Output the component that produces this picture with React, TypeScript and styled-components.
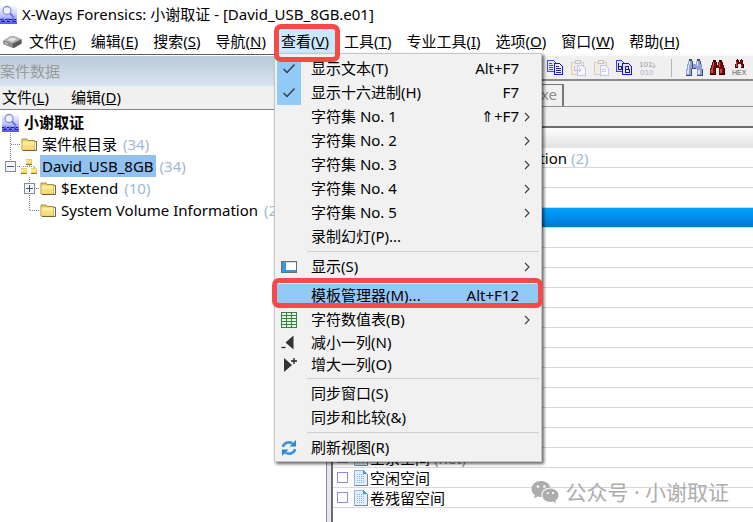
import React from 'react';
import styled, { createGlobalStyle, css } from 'styled-components';

const GlobalStyle = createGlobalStyle`
  *, *::before, *::after { box-sizing: border-box; }
  body {
    margin: 0;
    background: #fff;
    color: #000;
    font: 15px/20px "Noto Sans", "Noto Sans CJK SC", sans-serif;
    overflow: hidden;
  }
  button {
    font: inherit;
    color: inherit;
    background: none;
    border: 0;
    padding: 0;
    text-align: left;
  }
  ul { list-style: none; margin: 0; padding: 0; }
  svg { display: block; flex: none; }
`;

const Window = styled.div`
  position: relative;
  display: flex;
  flex-direction: column;
  min-height: 100vh;
`;

const TitleBar = styled.header`
  display: flex;
  align-items: center;
  gap: 5px;
  height: 29px;
  padding-bottom: 2px;
  white-space: nowrap;
`;

const WindowTitle = styled.h1`
  margin: 0;
  font-size: 15px;
  font-weight: 400;
`;

const MenuBar = styled.nav`
  display: flex;
  align-items: center;
  height: 25px;
  padding-left: 3px;
  white-space: nowrap;
`;

const MenuBarList = styled.ul`
  display: flex;
  gap: 1px;
`;

const MenuBarItem = styled.li`
  position: relative;
  height: 25px;
`;

const MenuBarButton = styled.button<{ $open?: boolean }>`
  height: 24px;
  padding: 0 7px;
  ${(p) => p.$open && css`background: #cce8ff;`}
`;

const Callout = styled.span<{ $inset: string }>`
  position: absolute;
  z-index: 5;
  inset: ${(p) => p.$inset};
  border: 5px solid #f54a47;
  border-radius: 7px;
  pointer-events: none;
`;

const Popup = styled.ul`
  position: absolute;
  z-index: 3;
  top: 24px;
  left: 0;
  width: 268px;
  padding: 3px 2px 1px;
  background: #f1f1f1;
  border: 1px solid #c6c6c6;
  box-shadow: 2px 2px 3px rgba(0, 0, 0, 0.6);
`;

const PopupItem = styled.li<{ $compact?: boolean }>`
  position: relative;
  height: ${(p) => (p.$compact ? 22 : 24)}px;
`;

const PopupButton = styled.button<{ $active?: boolean }>`
  display: grid;
  grid-template-columns: 24px 1fr auto 20px;
  align-items: center;
  width: 100%;
  height: 100%;
  ${(p) => p.$active && css`background: #91c9f7;`}
`;

const MarkCell = styled.span<{ $checked?: boolean }>`
  display: flex;
  align-items: center;
  justify-content: center;
  height: 100%;
  ${(p) => p.$checked && css`background: #91c9f7;`}
`;

const PopupLabel = styled.span`
  padding: 0 0 2px 10px;
`;

const Shortcut = styled.span`
  padding-bottom: 2px;
`;

const ArrowCell = styled.span`
  padding-left: 4px;
`;

const Separator = styled.li<{ $tight?: boolean }>`
  height: ${(p) => (p.$tight ? 5 : 6)}px;
  padding: 2px 0 0 30px;
  &::before {
    content: '';
    display: block;
    height: 1px;
    background: #d0d0d0;
  }
`;

const Workspace = styled.div`
  flex: 1;
  display: grid;
  grid-template-columns: 326px 7px minmax(0, 1fr);
`;

const CasePanel = styled.aside`
  border-top: 1px solid #5c5c5c;
  overflow: hidden;
  white-space: nowrap;
`;

const PanelCaption = styled.h2`
  margin: 1px 0 0;
  font-size: 15px;
  font-weight: 400;
  line-height: 30px;
  color: #9a9a9a;
  background: linear-gradient(#bccad9, #d7e3f0);
`;

const PanelMenu = styled.div`
  display: flex;
  gap: 22px;
  height: 24px;
  padding: 0 0 2px 2px;
  background: #f0f0f0;
  border-bottom: 1px solid #7d838b;
`;

const Tree = styled.ul`
  padding: 1px 0 0 2px;
`;

const TreeRow = styled.li`
  display: flex;
  align-items: center;
  height: 22px;
`;

const Expander = styled.button`
  height: 22px;
`;

const TreeLabel = styled.span<{ $selected?: boolean; $bold?: boolean }>`
  margin: 0 4px 0 3px;
  padding: 0 2px;
  line-height: 22px;
  font-weight: ${(p) => (p.$bold ? 700 : 400)};
  ${(p) => p.$selected && css`background: #91c1ee;`}
`;

const Count = styled.span`
  color: #9fb9d3;
`;

const Splitter = styled.div`
  background: #e4e8f6;
  border-left: 1px solid #8c8c8c;
  border-right: 2px solid #6c6c6c;
`;

const ContentPanel = styled.main`
  min-width: 0;
`;

const Toolbar = styled.div`
  display: flex;
  align-items: center;
  gap: 7px;
  height: 27px;
  padding-left: 214px;
  background: #f0f0f0;
  border-top: 2px solid #fafafa;
  border-bottom: 2px solid #8a8a8a;
`;

const ToolbarDivider = styled.span`
  width: 1px;
  height: 18px;
  margin: 0 7px 0 8px;
  background: #b4b4b4;
`;

const TabStrip = styled.div`
  display: flex;
  height: 26px;
  padding-top: 3px;
  background: #f0f0f0;
  border-bottom: 1px solid #8f8f8f;
`;

const Tab = styled.button`
  width: 231px;
  padding: 0 5px 4px 0;
  line-height: 18px;
  text-align: right;
  color: #8a8a8a;
  border-right: 2px solid #777;
  border-top: 1px solid #777;
`;

const PathBar = styled.div`
  height: 21px;
  background: #f0f0f0;
  border-bottom: 2px solid #6d6d6d;
`;

const FileTable = styled.table`
  width: 100%;
  border-spacing: 0;
`;

const HeaderCell = styled.th`
  height: 20px;
  padding: 0;
  background: linear-gradient(#fdfdfd, #e2e2e2);
`;

const FileCell = styled.td<{ $selected?: boolean }>`
  height: 20px;
  padding: 0;
  border-bottom: 1px solid #d6d4ee;
  ${(p) => p.$selected && css`background: linear-gradient(#00a2ff, #0077d4);`}
`;

const FileEntry = styled.label`
  display: flex;
  align-items: center;
  height: 19px;
  padding-left: 4px;
  line-height: 18px;
  white-space: pre;
`;

const Tick = styled.input`
  appearance: none;
  width: 11px;
  height: 11px;
  margin: 0 6px 0 0;
  border: 1px solid #9a86d8;
  background: #fff;
`;

const FileName = styled.span`
  margin-left: 2px;
`;

const Muted = styled.span`
  color: #8a8a8a;
`;

const Watermark = styled.div`
  position: absolute;
  right: 24px;
  bottom: 16px;
  display: flex;
  align-items: center;
  gap: 6px;
  font-size: 21px;
  line-height: 28px;
  color: #adadad;
  white-space: nowrap;
`;

const AppIcon = () => (
  <svg width="17" height="20" viewBox="0 0 17 20">
    <defs>
      <linearGradient id="appFade" x1="0" y1="0" x2="0" y2="1">
        <stop offset="0" stopColor="#fff" />
        <stop offset="0.6" stopColor="#bcc0ff" />
        <stop offset="1" stopColor="#4a50ee" />
      </linearGradient>
    </defs>
    <rect y="1" width="17" height="19" fill="url(#appFade)" />
    <circle cx="7" cy="6.5" r="4" fill="#eef2ff" stroke="#8790dc" strokeWidth="1.3" />
    <path d="M10 9.5l4 4" stroke="#6a74d8" strokeWidth="1.8" />
    <path d="M0 15.5h2m1-1v3m2-2h2m1-1v3m1-2h3m1-1v3m1-2h2M1 17.5h4m2 0h3m3 0h3" stroke="#1b1fb0" strokeWidth="1" fill="none" />
  </svg>
);

const DriveIcon = () => (
  <svg width="19" height="14" viewBox="0 0 20 14">
    <path d="M0.500 5.500L8 1h4l7.500 3v4.500L12 13h-2L0.500 9z" fill="#777" />
    <path d="M0.500 5.500L8 1h4l7.500 3-8 4.500h-2z" fill="#b4b4b4" />
    <path d="M4.500 5L9.500 2.200l5 1.600-4.700 2.700z" fill="#e6e6e6" />
    <path d="M0.500 5.500l9.500 3v4.500L0.500 9z" fill="#8e8e8e" />
    <path d="M10.500 8.500l9-4.500v4.500L12 13h-1.500z" fill="#5a5a5a" />
    <path d="M2 8l3 1.200" stroke="#ddd" />
  </svg>
);

const FolderIcon = () => (
  <svg width="16" height="14" viewBox="0 0 16 14">
    <path d="M1 2h5l1 1.500h6.500V13H1z" fill="#e9cf62" stroke="#a8903c" strokeWidth="1" />
    <path d="M1.500 4.500h12v8h-12z" fill="#fbeb9a" />
    <path d="M2 8h11v4.500H2z" fill="#f8dd78" />
    <path d="M14 4.500h1.500V13.500H2" stroke="#6f6335" fill="none" />
  </svg>
);

const PartitionIcon = () => (
  <svg width="16" height="16" viewBox="0 0 16 16" shapeRendering="crispEdges">
    <path d="M8 5v4M2.500 11V8.500h11V11" stroke="#8c8c8c" strokeDasharray="1 1" fill="none" />
    <path d="M5 1h6v5H5zM0 10h6v5H0zM10 10h6v5h-6z" fill="#ead05f" />
    <path d="M5 2h5v3H5zM0 11h5v3H0zM10 11h5v3h-5z" fill="#f9e68e" />
    <path d="M5 6.500h6M0 15.500h6M10 15.500h6" stroke="#8b7836" />
  </svg>
);

type BranchKind = 'tee' | 'corner' | 'lead';

const Branch = ({ kind, box }: { kind: BranchKind; box?: 'plus' | 'minus' }) => (
  <svg width="19" height="22" viewBox="0 0 19 22" shapeRendering="crispEdges">
    <path
      d={kind === 'tee' ? 'M8.500 0V22M9 11.500H19' : 'M8.500 0V12M9 11.500H19'}
      stroke="#808080"
      strokeDasharray="1 1"
      fill="none"
    />
    {box && (
      <>
        <rect x="3.500" y="6.500" width="10" height="10" fill="#f8f8f8" stroke="#8a8a8a" />
        <path d={box === 'plus' ? 'M5 11.500h7M8.500 8v7' : 'M5 11.500h7'} stroke="#34509a" />
      </>
    )}
  </svg>
);

const BlankGutter = styled.span`
  width: 19px;
  flex: none;
`;

const CheckIcon = () => (
  <svg width="14" height="12" viewBox="0 0 14 12">
    <path d="M1.500 6l3.500 3.500L12.500 1.500" stroke="#3a3f46" strokeWidth="1.500" fill="none" />
  </svg>
);

const ArrowIcon = () => (
  <svg width="8" height="10" viewBox="0 0 8 10">
    <path d="M2 1l4 4-4 4" stroke="#444" strokeWidth="1.200" fill="none" />
  </svg>
);

const LayoutIcon = () => (
  <svg width="16" height="12" viewBox="0 0 16 12" shapeRendering="crispEdges">
    <rect x="0.500" y="0.500" width="15" height="11" fill="#fff" stroke="#666f78" />
    <path d="M1 1h4v10H1zM5 9h10v2H5z" fill="#3b96e0" />
    <path d="M5 1h10v1H5z" fill="#cfe3f5" />
  </svg>
);

const TableIcon = () => (
  <svg width="16" height="16" viewBox="0 0 16 16" shapeRendering="crispEdges">
    <rect width="16" height="16" fill="#3d7f45" />
    {[1, 4, 7, 10, 13].map((y) => (
      <path key={y} d={`M1 ${y}h4v2H1zM6 ${y}h4v2H6zM11 ${y}h4v2h-4z`} fill="#e4f3e2" />
    ))}
  </svg>
);

const ShrinkIcon = () => (
  <svg width="16" height="16" viewBox="0 0 16 16">
    <path d="M12.500 0.500v14L4.500 7.500z" fill="#333" />
    <path d="M0.500 12.500h4" stroke="#222" strokeWidth="1.300" />
  </svg>
);

const GrowIcon = () => (
  <svg width="16" height="16" viewBox="0 0 16 16">
    <path d="M3 1v14l8-7z" fill="#333" />
    <path d="M10 4h6M13 1v6" stroke="#222" strokeWidth="1.300" />
  </svg>
);

const RefreshIcon = () => (
  <svg width="16" height="16" viewBox="0 0 16 16">
    <path d="M2 7C2.500 3 8 1 11.500 3.500M14 9c-.500 4-6 6-9.500 3.500" stroke="#3d95dc" strokeWidth="2.600" fill="none" />
    <path d="M15 0v6.500H8.500zM1 16V9.500h6.500z" fill="#2f86d0" />
  </svg>
);

const CopyIcon = () => (
  <svg width="16" height="16" viewBox="0 0 16 16" shapeRendering="crispEdges">
    <path d="M.500 .500h6l2 2v9h-8z" fill="#dfe3ff" stroke="#4b4be8" />
    <path d="M2 3.500h3M2 5.500h4M2 7.500h4M2 9.500h4" stroke="#4b4be8" />
    <path d="M7.500 3.500h5l3 3v8h-8z" fill="#eef0ff" stroke="#1414e6" />
    <path d="M9 6.500h3M9 8.500h5M9 10.500h5M9 12.500h5" stroke="#2a2a90" />
  </svg>
);

const PasteIcon = ({ arrow }: { arrow?: boolean }) => (
  <svg width="16" height="16" viewBox="0 0 16 16" shapeRendering="crispEdges">
    <path d="M1.500 2.500h12v12h-12z" fill="#f3ece4" stroke="#d9cdbd" />
    <path d="M5 .500h5v3H5z" fill="#eee" stroke="#c8c4c0" />
    <path d="M7.500 5.500h5l2.500 2.500v7H7.500z" fill="#f6f6ff" stroke="#c4c4ec" />
    {arrow ? (
      <path d="M4 6v4h7M9 8l2 2-2 2" stroke="#bcbedd" fill="none" />
    ) : (
      <path d="M9 9.500h4M9 11.500h4" stroke="#c9c9ee" />
    )}
  </svg>
);

const CopyHexIcon = () => (
  <svg width="16" height="16" viewBox="0 0 16 16" shapeRendering="crispEdges">
    <path d="M.500 .500h5l2 2v9h-7z" fill="#dfe3ff" stroke="#3c3ce8" />
    <path d="M6.500 3.500h6l3 3v8h-9z" fill="#dfe3ff" stroke="#1414e6" />
    <path d="M2.500 3v7M3 6.500h2v3H3" stroke="#22224a" fill="none" />
    <path d="M9.500 6v7M10 6.500h2v3h-2M10 9.500h3v3h-3" stroke="#22224a" fill="none" />
  </svg>
);

const BinaryIcon = () => (
  <svg width="17" height="16" viewBox="0 0 17 16">
    <text x="0" y="7" fontSize="8" fontFamily="Liberation Sans" fill="#9a9a9a">101</text>
    <text x="1" y="15" fontSize="8" fontFamily="Liberation Sans" fill="#b0b0dc">010</text>
    <path d="M13 2.500q3 1 2 5M13 6l2 2 1.500-2.500" stroke="#b8b8b8" fill="none" />
  </svg>
);

interface BinocularsProps {
  body: string;
  edge: string;
  shine: string;
  size?: number;
}

const Binoculars = ({ body, edge, shine, size = 17 }: BinocularsProps) => (
  <svg width={size} height={size} viewBox="0 0 16 16" shapeRendering="crispEdges">
    <path d="M3 0h3v2H3zM10 0h3v2h-3z" fill={edge} />
    <path d="M2 2h5v3H2zM9 2h5v3H9zM1 5h6v4H1zM9 5h6v4H9zM0 9h6v6H0zM10 9h6v6h-6zM7 5h2v4H7z" fill={body} />
    <path d="M0 15h6v1H0zM10 15h6v1h-6zM5 9h1v6H5zM15 9h1v6h-1zM6 2h1v7H6zM13 2h1v3h-1zM7 8h2v1H7z" fill={edge} />
    <path d="M3 2h1v4H3zM2 6h1v4H2zM1 10h2v4H1zM10 2h1v5h-1zM11 10h2v4h-2z" fill={shine} />
  </svg>
);

const HexSearchIcon = () => (
  <svg width="16" height="17" viewBox="0 0 16 17">
    <g transform="translate(3 0)">
      <Binoculars body="#740c0c" edge="#3a0000" shine="#c25050" size={9} />
    </g>
    <text x="0" y="16" fontSize="7" fontFamily="Liberation Sans" fill="#555">HEX</text>
  </svg>
);

const DocIcon = () => (
  <svg width="14" height="16" viewBox="0 0 14 16" shapeRendering="crispEdges">
    <path d="M.500 .500h9l3.500 3.500v11.500H.500z" fill="#e3effc" stroke="#8fb3de" />
    <path d="M3 4.500h7M3 6.500h8M3 8.500h8M3 10.500h8M3 12.500h8" stroke="#8ab4e6" strokeDasharray="1 1" />
    <path d="M9 0v4h4z" fill="#3f9be8" />
    <path d="M13.500 4v12M1 15.500h13" stroke="#7b8694" fill="none" />
  </svg>
);

const WeChatIcon = () => (
  <svg width="28" height="24" viewBox="0 0 28 24">
    <path d="M10 1C4.500 1 .500 4.500.500 9c0 2.500 1.300 4.600 3.300 6L3 18.500l3.600-2c1.400.400 2.800.500 4 .400-1.400-5 3-9.600 8.800-9.400C18.500 3.500 14.600 1 10 1z" fill="#adadad" />
    <path d="M19.400 8.500c-4.600 0-8 3-8 6.700s3.400 6.700 8 6.700c1 0 2-.100 2.800-.400l3 1.600-.700-2.700c1.900-1.300 3-3.100 3-5.200 0-3.700-3.600-6.700-8.100-6.700z" fill="#adadad" />
    <g fill="#fff">
      <circle cx="7" cy="6.500" r="1.300" />
      <circle cx="13.300" cy="6.500" r="1.300" />
      <circle cx="16.800" cy="13" r="1.100" />
      <circle cx="22" cy="13" r="1.100" />
    </g>
  </svg>
);

interface KeyedLabel {
  text: string;
  accel: string;
}

const menusBefore: KeyedLabel[] = [
  { text: '文件', accel: 'F' },
  { text: '编辑', accel: 'E' },
  { text: '搜索', accel: 'S' },
  { text: '导航', accel: 'N' },
];

const menusAfter: KeyedLabel[] = [
  { text: '工具', accel: 'T' },
  { text: '专业工具', accel: 'I' },
  { text: '选项', accel: 'O' },
  { text: '窗口', accel: 'W' },
  { text: '帮助', accel: 'H' },
];

const Accel = ({ text, accel }: KeyedLabel) => (
  <>
    {text}(<u>{accel}</u>)
  </>
);

interface Entry {
  label: string;
  shortcut?: string;
  checked?: boolean;
  submenu?: boolean;
  active?: boolean;
  compact?: boolean;
  icon?: React.ReactNode;
}

const viewMenu: (Entry | 'line' | 'tightLine')[] = [
  { label: '显示文本(T)', shortcut: 'Alt+F7', checked: true },
  { label: '显示十六进制(H)', shortcut: 'F7', checked: true },
  { label: '字符集 No. 1', shortcut: '⇑+F7', submenu: true },
  { label: '字符集 No. 2', submenu: true },
  { label: '字符集 No. 3', submenu: true },
  { label: '字符集 No. 4', submenu: true },
  { label: '字符集 No. 5', submenu: true },
  { label: '录制幻灯(P)...' },
  'line',
  { label: '显示(S)', submenu: true, icon: <LayoutIcon /> },
  'tightLine',
  { label: '模板管理器(M)...', shortcut: 'Alt+F12', active: true },
  { label: '字符数值表(B)', submenu: true, icon: <TableIcon /> },
  { label: '减小一列(N)', compact: true, icon: <ShrinkIcon /> },
  { label: '增大一列(O)', compact: true, icon: <GrowIcon /> },
  'line',
  { label: '同步窗口(S)' },
  { label: '同步和比较(&)' },
  'line',
  { label: '刷新视图(R)', icon: <RefreshIcon /> },
];

const ViewPopup = () => (
  <Popup>
    {viewMenu.map((entry, i) =>
      typeof entry === 'string' ? (
        <Separator key={i} $tight={entry === 'tightLine'} />
      ) : (
        <PopupItem key={i} $compact={entry.compact}>
          <PopupButton $active={entry.active}>
            <MarkCell $checked={entry.checked}>{entry.checked ? <CheckIcon /> : entry.icon}</MarkCell>
            <PopupLabel>{entry.label}</PopupLabel>
            <Shortcut>{entry.shortcut}</Shortcut>
            <ArrowCell>{entry.submenu && <ArrowIcon />}</ArrowCell>
          </PopupButton>
          {entry.active && <Callout $inset="-6px -4px 0 -5px" />}
        </PopupItem>
      ),
    )}
  </Popup>
);

interface FileRow {
  name?: string;
  count?: string;
  note?: string;
  listed?: boolean;
  selected?: boolean;
}

const files: FileRow[] = [
  { name: 'System Volume Information', count: '(2)', listed: true },
  {},
  {},
  { selected: true },
  ...Array.from({ length: 11 }, () => ({})),
  { name: '空余空间', note: '(net)', listed: true },
  { name: '空闲空间', listed: true },
  { name: '卷残留空间', listed: true },
];

export default function App() {
  return (
    <>
      <GlobalStyle />
      <Window>
        <TitleBar>
          <AppIcon />
          <WindowTitle>X-Ways Forensics: 小谢取证 - [David_USB_8GB.e01]</WindowTitle>
        </TitleBar>
        <MenuBar>
          <DriveIcon />
          <MenuBarList>
            {menusBefore.map((m) => (
              <MenuBarItem key={m.accel}>
                <MenuBarButton><Accel {...m} /></MenuBarButton>
              </MenuBarItem>
            ))}
            <MenuBarItem>
              <MenuBarButton $open><Accel text="查看" accel="V" /></MenuBarButton>
              <ViewPopup />
              <Callout $inset="-5px -4px -8px 0" />
            </MenuBarItem>
            {menusAfter.map((m) => (
              <MenuBarItem key={m.accel}>
                <MenuBarButton><Accel {...m} /></MenuBarButton>
              </MenuBarItem>
            ))}
          </MenuBarList>
        </MenuBar>
        <Workspace>
          <CasePanel>
            <PanelCaption>案件数据</PanelCaption>
            <PanelMenu>
              <button><Accel text="文件" accel="L" /></button>
              <button><Accel text="编辑" accel="D" /></button>
            </PanelMenu>
            <Tree>
              <TreeRow>
                <AppIcon />
                <TreeLabel $bold>小谢取证</TreeLabel>
              </TreeRow>
              <TreeRow>
                <Branch kind="tee" />
                <FolderIcon />
                <TreeLabel>案件根目录</TreeLabel>
                <Count>(34)</Count>
              </TreeRow>
              <TreeRow>
                <Expander aria-label="David_USB_8GB"><Branch kind="lead" box="minus" /></Expander>
                <PartitionIcon />
                <TreeLabel $selected>David_USB_8GB</TreeLabel>
                <Count>(34)</Count>
              </TreeRow>
              <TreeRow>
                <BlankGutter />
                <Expander aria-label="$Extend"><Branch kind="tee" box="plus" /></Expander>
                <FolderIcon />
                <TreeLabel>$Extend</TreeLabel>
                <Count>(10)</Count>
              </TreeRow>
              <TreeRow>
                <BlankGutter />
                <Branch kind="corner" />
                <FolderIcon />
                <TreeLabel>System Volume Information</TreeLabel>
                <Count>(2)</Count>
              </TreeRow>
            </Tree>
          </CasePanel>
          <Splitter />
          <ContentPanel>
            <Toolbar>
              <button aria-label="Copy"><CopyIcon /></button>
              <button aria-label="Paste into"><PasteIcon arrow /></button>
              <button aria-label="Paste"><PasteIcon /></button>
              <button aria-label="Copy hex"><CopyHexIcon /></button>
              <button aria-label="Convert"><BinaryIcon /></button>
              <ToolbarDivider />
              <button aria-label="Simultaneous search">
                <Binoculars body="#8fa2d6" edge="#3c4876" shine="#dfe6fa" />
              </button>
              <button aria-label="Find text">
                <Binoculars body="#740c0c" edge="#3a0000" shine="#c25050" size={15} />
              </button>
              <button aria-label="Find hex"><HexSearchIcon /></button>
            </Toolbar>
            <TabStrip>
              <Tab>xe</Tab>
            </TabStrip>
            <PathBar />
            <FileTable>
              <thead>
                <tr><HeaderCell aria-label="Name" /></tr>
              </thead>
              <tbody>
                {files.map((f, i) => (
                  <tr key={i}>
                    <FileCell $selected={f.selected}>
                      {f.listed && (
                        <FileEntry>
                          <Tick type="checkbox" />
                          <DocIcon />
                          <FileName>
                            {f.name}
                            {f.count && <Count> {f.count}</Count>}
                            {f.note && <Muted> {f.note}</Muted>}
                          </FileName>
                        </FileEntry>
                      )}
                    </FileCell>
                  </tr>
                ))}
              </tbody>
            </FileTable>
          </ContentPanel>
        </Workspace>
        <Watermark>
          <WeChatIcon />
          <span>公众号 · 小谢取证</span>
        </Watermark>
      </Window>
    </>
  );
}
